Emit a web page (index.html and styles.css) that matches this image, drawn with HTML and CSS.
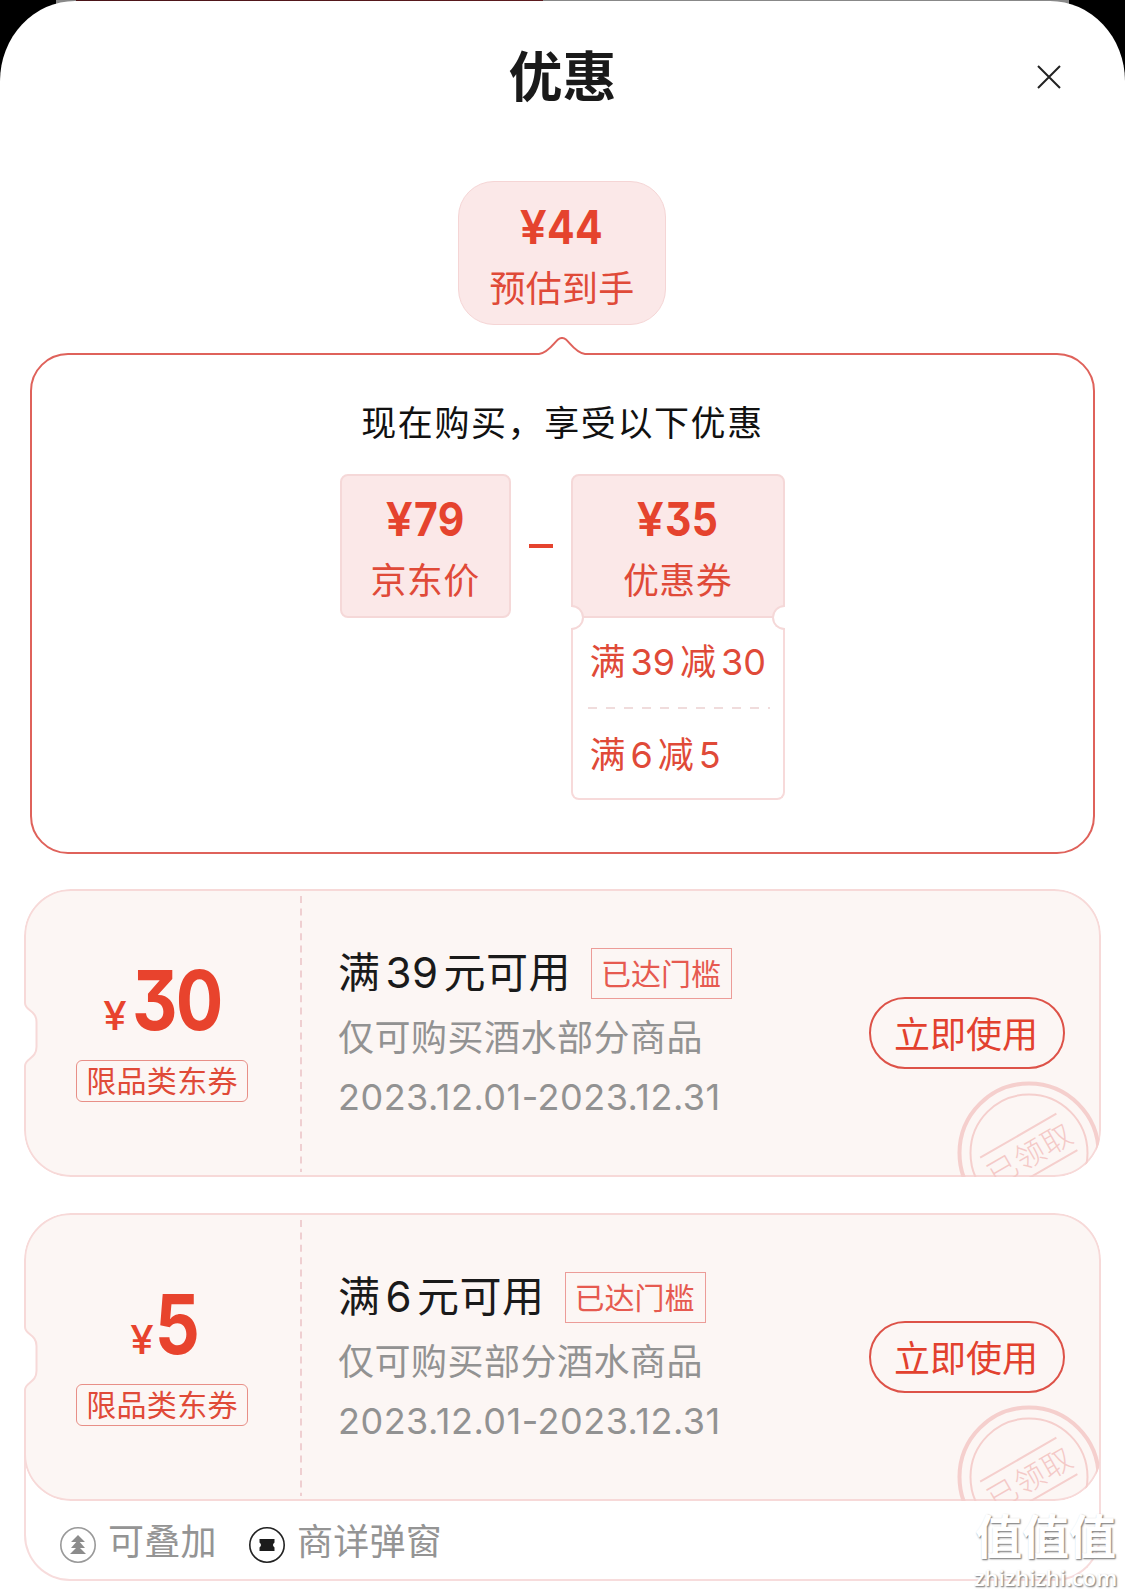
FILE: index.html
```html
<!DOCTYPE html>
<html lang="zh-CN">
<head>
    <meta charset="UTF-8">
    <meta name="viewport" content="width=device-width, initial-scale=1.0">
    <title>优惠</title>
    <link rel="stylesheet" href="styles.css">
</head>
<body>
    <div class="page-behind"></div>
    <div class="sheet">
        <header class="header">
            <h1>优惠</h1>
            <svg class="close" width="26" height="26" viewBox="0 0 26 26"><path d="M2 2L24 24M24 2L2 24"/></svg>
        </header>

        <div class="estimate">
            <div class="price"><span class="sign">¥</span><span class="digits">44</span></div>
            <div class="label">预估到手</div>
        </div>

        <section class="panel">
            <svg class="pointer" width="50" height="20" viewBox="0 0 50 20">
                <path class="pointer-fill" d="M1 20V17C12 17 18 3 22 2Q25 0 28 2C32 3 38 17 49 17V20Z"/>
                <path class="pointer-line" d="M0 17H2C11 16 17 6 21 2.5Q25 -.5 29 2.5C33 6 39 16 48 17H50"/>
            </svg>
            <p class="panel-title">现在购买，享受以下优惠</p>
            <div class="formula">
                <div class="box box-price">
                    <div class="price"><span class="sign">¥</span><span class="digits">79</span></div>
                    <div class="label">京东价</div>
                </div>
                <div class="minus"></div>
                <div class="ticket">
                    <div class="box box-coupon">
                        <div class="price"><span class="sign">¥</span><span class="digits">35</span></div>
                        <div class="label">优惠券</div>
                    </div>
                    <div class="notch notch-left"></div>
                    <div class="notch notch-right"></div>
                    <div class="rules">
                        <div class="rule">满<span class="num">39</span>减<span class="num">30</span></div>
                        <svg class="rule-line" width="182" height="2"><line x1="0" y1="1" x2="182" y2="1"/></svg>
                        <div class="rule">满<span class="num">6</span>减<span class="num">5</span></div>
                    </div>
                </div>
            </div>
        </section>

        <section class="coupon">
            <svg class="coupon-bg" width="1077" height="288" viewBox="0 0 1077 288">
                <path class="shape" d="M47 1H1030A46 46 0 0 1 1076 47V241A46 46 0 0 1 1030 287H47A46 46 0 0 1 1 241V177C1 169 12.500 170 12.500 158V133C12.500 121 1 122 1 114V47A46 46 0 0 1 47 1Z"/>
                <line class="split" x1="277" y1="7" x2="277" y2="283"/>
                <g class="stamp">
                    <circle class="ring" cx="1005" cy="264" r="69.500"/>
                    <circle cx="1005" cy="264" r="58.500"/>
                    <g transform="translate(1006 263) rotate(-30)">
                        <path d="M-46 -20H42M-52 22H42"/>
                        <text x="-1" y="13" text-anchor="middle">已领取</text>
                    </g>
                </g>
            </svg>
            <div class="amount">
                <div class="money"><span class="yen">¥</span><span class="big">30</span></div>
                <div class="type">限品类东券</div>
            </div>
            <div class="info">
                <div class="info-title">满<span class="num">39</span>元可用<span class="reached">已达门槛</span></div>
                <div class="desc">仅可购买酒水部分商品</div>
                <div class="date">2023.12.01-2023.12.31</div>
            </div>
            <a class="use">立即使用</a>
        </section>

        <section class="coupon coupon-last">
            <svg class="coupon-bg" width="1077" height="288" viewBox="0 0 1077 288">
                <path class="shape" d="M47 1H1030A46 46 0 0 1 1076 47V241A46 46 0 0 1 1030 287H47A46 46 0 0 1 1 241V177C1 169 12.500 170 12.500 158V133C12.500 121 1 122 1 114V47A46 46 0 0 1 47 1Z"/>
                <line class="split" x1="277" y1="7" x2="277" y2="283"/>
                <g class="stamp">
                    <circle class="ring" cx="1005" cy="264" r="69.500"/>
                    <circle cx="1005" cy="264" r="58.500"/>
                    <g transform="translate(1006 263) rotate(-30)">
                        <path d="M-46 -20H42M-52 22H42"/>
                        <text x="-1" y="13" text-anchor="middle">已领取</text>
                    </g>
                </g>
            </svg>
            <div class="amount">
                <div class="money"><span class="yen">¥</span><span class="big">5</span></div>
                <div class="type">限品类东券</div>
            </div>
            <div class="info">
                <div class="info-title">满<span class="num">6</span>元可用<span class="reached">已达门槛</span></div>
                <div class="desc">仅可购买部分酒水商品</div>
                <div class="date">2023.12.01-2023.12.31</div>
            </div>
            <a class="use">立即使用</a>
        </section>

        <footer class="extra">
            <svg class="icon" width="38" height="38" viewBox="0 0 38 38">
                <circle cx="19" cy="19" r="17.200" fill="none" stroke="#999" stroke-width="1.600"/>
                <path fill="#8c8c8c" d="M19 9L26 16H12ZM19 14L26 22H12ZM19 20L27 28H11Z"/>
            </svg>
            <span class="extra-text">可叠加</span>
            <svg class="icon icon-ticket" width="38" height="38" viewBox="0 0 38 38">
                <circle cx="19" cy="19" r="17.200" fill="none" stroke="#222" stroke-width="1.600"/>
                <path fill="#1c1c1c" d="M11.500 13H26.500V16.500Q23.500 19 26.500 21.500V25H11.500V21.500Q14.500 19 11.500 16.500Z"/>
            </svg>
            <span class="extra-text">商详弹窗</span>
            <svg class="arrow" width="26" height="16" viewBox="0 0 26 16"><path d="M3 4L10 11L23 3"/></svg>
        </footer>

        <div class="watermark">
            <div class="wm-name">值值值</div>
            <div class="wm-site">zhizhizhi.com</div>
        </div>
    </div>
</body>
</html>
```
FILE: styles.css
```css
* {
    margin: 0;
    padding: 0;
    box-sizing: border-box;
}
body {
    width: 1125px;
    height: 1593px;
    background: #000;
    color: #1a1a1a;
    font-family: "Inter", "Noto Sans CJK SC", sans-serif;
    overflow: hidden;
}
svg {
    display: block;
}
.page-behind {
    height: 4px;
    margin: 0 56px -3px;
    background: linear-gradient(90deg, #888 20px, #4a1418 20px, #5c1a1e 487px, #888 487px);
}
.sheet {
    position: relative;
    height: 1592px;
    padding: 0 24px;
    background: #fff;
    border-radius: 75px 75px 0 0 / 80px 80px 0 0;
}
.header {
    position: relative;
    height: 180px;
    text-align: center;
}
.header h1 {
    padding-top: 33px;
    font-family: "Noto Sans CJK SC", sans-serif;
    font-size: 54px;
    line-height: 80px;
    font-weight: 700;
}
.close {
    position: absolute;
    top: 63px;
    right: 39px;
    fill: none;
    stroke: #222;
    stroke-width: 2;
}
.estimate {
    width: 208px;
    height: 144px;
    margin: 0 0 0 434px;
    padding-top: 20px;
    border: 1px solid #f5d5d5;
    border-radius: 36px;
    background: #fbe8e8;
    text-align: center;
}
.price {
    display: flex;
    justify-content: center;
    align-items: baseline;
    height: 50px;
    line-height: 50px;
    font-weight: 700;
    color: #e5432e;
}
.sign {
    font-size: 47px;
    font-weight: 600;
    margin-right: 1px;
    transform: scaleX(1.02);
}
.digits {
    margin-right: -8px;
    font-size: 47px;
    letter-spacing: 0.5px;
    font-feature-settings: "cv09";
    transform: scaleX(0.87);
    transform-origin: left;
}
.label {
    margin-top: 13px;
    font-size: 36px;
    line-height: 48px;
    letter-spacing: 0.3px;
    color: #e04a38;
}

/* 价格明细 */
.panel {
    position: relative;
    width: 1065px;
    height: 501px;
    margin: 28px 0 0 6px;
    padding-top: 44px;
    border: 2px solid #df625b;
    border-radius: 38px;
}
.pointer {
    position: absolute;
    top: -18px;
    left: 505px;
}
.pointer-fill {
    fill: #fff;
}
.pointer-line {
    fill: none;
    stroke: #df625b;
    stroke-width: 2;
}
.panel-title {
    font-size: 35px;
    line-height: 48px;
    letter-spacing: 1.6px;
    text-align: center;
    color: #111;
}
.formula {
    display: flex;
    justify-content: center;
    align-items: flex-start;
    margin: 27px 1px 0 0;
}
.box {
    height: 144px;
    padding-top: 18px;
    border: 2px solid #f5d8d8;
    border-radius: 8px;
    background: #fbe8e8;
    text-align: center;
}
.box-price {
    width: 171px;
}
.box-coupon {
    border-radius: 8px 8px 0 0;
}
.minus {
    width: 24px;
    height: 4px;
    margin: 70px 18px 0;
    background: #e5432e;
}
.ticket {
    position: relative;
    width: 214px;
}
.notch {
    position: absolute;
    top: 131px;
    width: 13px;
    height: 25px;
    border: 2px solid #f5d8d8;
    background: #fff;
}
.notch-left {
    left: 0;
    border-left: none;
    border-radius: 0 13px 13px 0;
}
.notch-right {
    right: 0;
    border-right: none;
    border-radius: 13px 0 0 13px;
}
.rules {
    height: 182px;
    padding: 19px 0 0 17px;
    border: 2px solid #f7dada;
    border-top: none;
    border-radius: 0 0 8px 8px;
}
.rule {
    height: 50px;
    font-size: 36px;
    line-height: 50px;
    color: #e04a38;
    white-space: nowrap;
}
.num {
    margin: 0 5px;
}
.rule-line {
    margin: 20px 0 21px -2px;
    stroke: #f0dcdc;
    stroke-width: 2;
    stroke-dasharray: 9 9;
}

/* 优惠券 */
.coupon {
    position: relative;
    z-index: 1;
    display: flex;
    width: 1077px;
    height: 288px;
    margin-top: 35px;
    border-radius: 47px;
    overflow: hidden;
}
.coupon-last {
    margin-top: 36px;
}
.coupon-bg {
    position: absolute;
    top: 0;
    left: 0;
    z-index: -1;
}
.shape {
    fill: #fcf6f4;
    stroke: #f7d9d8;
    stroke-width: 2;
}
.split {
    stroke: #efcfd1;
    stroke-width: 2;
    stroke-dasharray: 7 5.4;
}
.stamp {
    fill: none;
    stroke: #f5cfcd;
    stroke-width: 2;
}
.stamp .ring {
    stroke-width: 4;
}
.stamp text {
    fill: #f4c9c7;
    stroke: none;
    font-size: 30px;
    font-weight: 300;
    letter-spacing: 1px;
}
.amount {
    display: flex;
    flex-direction: column;
    align-items: center;
    width: 276px;
    padding-top: 67px;
}
.money {
    display: flex;
    align-items: baseline;
    height: 104px;
    line-height: 88px;
    color: #e8432d;
}
.yen {
    margin-right: 4px;
    font-size: 39px;
    font-weight: 500;
    transform: scaleX(1.08);
}
.big {
    font-size: 83px;
    font-weight: 700;
    letter-spacing: -2px;
    font-feature-settings: "cv09";
    margin: 0 -9px 0 -6px;
    transform: scaleX(0.85);
}
.type {
    width: 172px;
    height: 42px;
    border: 1px solid #e88f87;
    border-radius: 6px;
    font-size: 30px;
    line-height: 41px;
    letter-spacing: 0.3px;
    text-align: center;
    color: #e04a38;
}
.info {
    flex: 1;
    padding: 58px 0 0 38px;
}
.info-title {
    display: flex;
    align-items: center;
    height: 52px;
    font-size: 42px;
    line-height: 54px;
    letter-spacing: 0.5px;
}
.reached {
    width: 141px;
    height: 51px;
    margin-left: 20px;
    padding-right: 1px;
    border: 1px solid #ec9c98;
    font-size: 30px;
    line-height: 51px;
    letter-spacing: 0;
    text-align: center;
    color: #e65a50;
}
.desc,
.date {
    font-size: 36px;
    color: #929292;
}
.desc {
    margin-top: 15px;
    line-height: 48px;
    letter-spacing: 0.5px;
}
.date {
    margin-top: 11px;
    line-height: 48px;
    letter-spacing: 0.5px;
}
.use {
    width: 196px;
    height: 72px;
    margin: 108px 36px 0 0;
    padding-right: 2px;
    border: 2px solid #dd5248;
    border-radius: 36px;
    font-size: 36px;
    line-height: 72px;
    text-align: center;
    color: #e2412e;
}

/* 底部说明 */
.extra {
    display: flex;
    width: 1077px;
    height: 139px;
    margin-top: -59px;
    padding: 84px 33px 0;
    border: 2px solid #f7dcdc;
    border-top: none;
    border-radius: 0 0 46px 46px;
}
.icon-ticket {
    margin-left: 31px;
}
.extra-text {
    margin: -8px 0 0 11px;
    font-size: 36px;
    line-height: 48px;
    letter-spacing: 0.3px;
    color: #949494;
}
.arrow {
    margin: 4px 0 0 auto;
    fill: none;
    stroke: #999;
    stroke-width: 2;
}
.watermark {
    position: absolute;
    right: 8px;
    bottom: 2px;
    z-index: 2;
    width: 143px;
    color: #fff;
    text-align: center;
    text-shadow: 1px 1px 2px #888, 1px 1px 1px #aaa;
}
.wm-name {
    font-size: 47px;
    line-height: 52px;
    font-weight: 700;
}
.wm-site {
    font-family: "Open Sans", sans-serif;
    font-size: 22px;
    line-height: 28px;
    font-weight: 600;
}
```
